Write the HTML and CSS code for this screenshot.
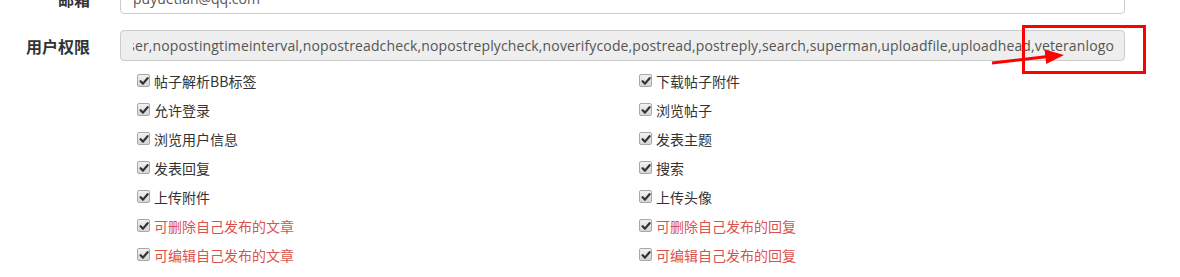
FILE: index.html
```html
<!DOCTYPE html>
<html lang="zh-CN">
<head>
  <meta charset="UTF-8">
  <meta name="viewport" content="width=device-width, initial-scale=1.0">
  <link rel="stylesheet" href="styles.css">
  <title>用户权限</title>
</head>
<body>

  <div class="page">

    <div class="form-row row-email">
      <label class="row-label">邮箱</label>
      <div class="field">
        <div class="field-clip">puyuetian@qq.com</div>
      </div>
    </div>

    <div class="form-row row-perm">
      <label class="row-label">用户权限</label>
      <div class="field field-readonly">
        <div class="field-clip">
          <span class="field-text">bbcode,deleteoneselfread,deleteoneselfreply,download,editoneselfread,editoneselfreply,login,lookread,lookuser,nopostingtimeinterval,nopostreadcheck,nopostreplycheck,noverifycode,postread,postreply,search,superman,uploadfile,uploadhead,veteranlogo</span>
        </div>
      </div>
    </div>

    <div class="perm-list">
      <label class="perm"><span class="box"><svg viewBox="0 0 10 10"><path d="M1.6 5.2 L4 7.6 L8.6 2.2"/></svg></span>帖子解析BB标签</label>
      <label class="perm"><span class="box"><svg viewBox="0 0 10 10"><path d="M1.6 5.2 L4 7.6 L8.6 2.2"/></svg></span>下载帖子附件</label>
      <label class="perm"><span class="box"><svg viewBox="0 0 10 10"><path d="M1.6 5.2 L4 7.6 L8.6 2.2"/></svg></span>允许登录</label>
      <label class="perm"><span class="box"><svg viewBox="0 0 10 10"><path d="M1.6 5.2 L4 7.6 L8.6 2.2"/></svg></span>浏览帖子</label>
      <label class="perm"><span class="box"><svg viewBox="0 0 10 10"><path d="M1.6 5.2 L4 7.6 L8.6 2.2"/></svg></span>浏览用户信息</label>
      <label class="perm"><span class="box"><svg viewBox="0 0 10 10"><path d="M1.6 5.2 L4 7.6 L8.6 2.2"/></svg></span>发表主题</label>
      <label class="perm"><span class="box"><svg viewBox="0 0 10 10"><path d="M1.6 5.2 L4 7.6 L8.6 2.2"/></svg></span>发表回复</label>
      <label class="perm"><span class="box"><svg viewBox="0 0 10 10"><path d="M1.6 5.2 L4 7.6 L8.6 2.2"/></svg></span>搜索</label>
      <label class="perm"><span class="box"><svg viewBox="0 0 10 10"><path d="M1.6 5.2 L4 7.6 L8.6 2.2"/></svg></span>上传附件</label>
      <label class="perm"><span class="box"><svg viewBox="0 0 10 10"><path d="M1.6 5.2 L4 7.6 L8.6 2.2"/></svg></span>上传头像</label>
      <label class="perm perm-danger"><span class="box"><svg viewBox="0 0 10 10"><path d="M1.6 5.2 L4 7.6 L8.6 2.2"/></svg></span>可删除自己发布的文章</label>
      <label class="perm perm-danger"><span class="box"><svg viewBox="0 0 10 10"><path d="M1.6 5.2 L4 7.6 L8.6 2.2"/></svg></span>可删除自己发布的回复</label>
      <label class="perm perm-danger"><span class="box"><svg viewBox="0 0 10 10"><path d="M1.6 5.2 L4 7.6 L8.6 2.2"/></svg></span>可编辑自己发布的文章</label>
      <label class="perm perm-danger"><span class="box"><svg viewBox="0 0 10 10"><path d="M1.6 5.2 L4 7.6 L8.6 2.2"/></svg></span>可编辑自己发布的回复</label>
    </div>

    <!-- 截图标注 -->
    <div class="mark-box"></div>
    <svg class="mark-arrow" width="1180" height="277" viewBox="0 0 1180 277">
      <line x1="992" y1="63" x2="1048" y2="56.6" stroke="#f00" stroke-width="3"/>
      <polygon points="1064,55 1044.6,49.5 1046.2,64" fill="#f00"/>
    </svg>

  </div>

</body>
</html>
```

FILE: styles.css
```css
html, body {
  margin: 0;
  padding: 0;
  background: #fff;
}

body {
  font-family: "Open Sans", "Noto Sans CJK SC", sans-serif;
  font-size: 14px;
  color: #333;
}

.page {
  position: relative;
  width: 1180px;
  height: 277px;
  overflow: hidden;
}

.form-row {
  display: flex;
  align-items: center;
  gap: 30px;
}

.row-email {
  margin-top: -17px;
}

.row-perm {
  margin-top: 16px;
}

.row-label {
  width: 90px;
  flex: none;
  text-align: right;
  font-family: "Noto Sans CJK SC", sans-serif;
  font-weight: bold;
  font-size: 16px;
  line-height: 22px;
  color: #333;
}

.field {
  box-sizing: border-box;
  width: 1005px;
  height: 31px;
  padding: 0 10px 0 12px;
  border: 1px solid #ccc;
  border-radius: 4px;
  background: #fff;
  color: #555;
  font-size: 14px;
  display: flex;
  align-items: center;
}

.field-clip {
  flex: 1;
  min-width: 0;
  display: flex;
  white-space: nowrap;
  overflow: hidden;
}

.field-readonly {
  background: #eee;
}

.field-readonly .field-clip {
  justify-content: flex-end;
}

.field-text {
  flex: none;
  letter-spacing: 0.13px;
}

.perm-list {
  display: grid;
  grid-template-columns: 502px 502px;
  grid-auto-rows: 29px;
  margin: 5px 0 0 136px;
}

.perm {
  display: flex;
  align-items: center;
  gap: 4px;
  font-family: "Noto Sans CJK SC", sans-serif;
  font-size: 14px;
  color: #333;
}

.perm-danger {
  color: #d9534f;
}

.box {
  box-sizing: border-box;
  width: 13px;
  height: 13px;
  margin-left: 1px;
  border: 1px solid #a8a8a8;
  border-radius: 2px;
  background: linear-gradient(#f2f2f2, #d6d6d6);
  display: flex;
  align-items: center;
  justify-content: center;
}

.box svg {
  width: 10px;
  height: 10px;
}

.box path {
  fill: none;
  stroke: #333;
  stroke-width: 2.2;
  stroke-linecap: round;
  stroke-linejoin: round;
}

.mark-box {
  position: absolute;
  left: 1022px;
  top: 25px;
  width: 118px;
  height: 43px;
  border: 3px solid #f00;
}

.mark-arrow {
  position: absolute;
  left: 0;
  top: 0;
  pointer-events: none;
}
```
